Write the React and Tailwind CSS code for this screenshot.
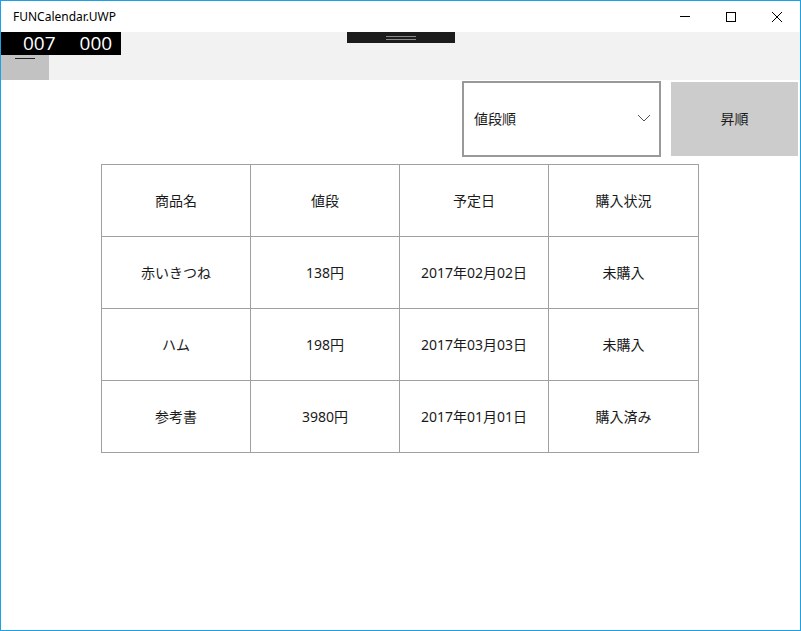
import React from "react";

const rows = [
  ["商品名", "値段", "予定日", "購入状況"],
  ["赤いきつね", "138円", "2017年02月02日", "未購入"],
  ["ハム", "198円", "2017年03月03日", "未購入"],
  ["参考書", "3980円", "2017年01月01日", "購入済み"],
];

export default function App() {
  return (
    <div
      className="w-[801px] h-[631px] border border-[#1aa1e6] bg-white flex flex-col overflow-hidden text-[#1a1a1a]"
      style={{ fontFamily: '"Noto Sans", "Noto Sans CJK JP", sans-serif' }}
    >
      {/* title bar */}
      <div className="h-[31px] flex items-center shrink-0">
        <div className="pl-[12px] text-[12px] text-black flex-1 leading-none">FUNCalendar.UWP</div>
        <div className="flex h-full">
          <div className="w-[46px] h-full flex items-center justify-center">
            <div className="w-[10px] h-px bg-black" />
          </div>
          <div className="w-[46px] h-full flex items-center justify-center">
            <div className="w-[10px] h-[10px] border border-black" />
          </div>
          <div className="w-[46px] h-full flex items-center justify-center">
            <svg width="10" height="10" viewBox="0 0 10 10">
              <path d="M0 0 L10 10 M10 0 L0 10" stroke="#000" strokeWidth="1" />
            </svg>
          </div>
        </div>
      </div>
      {/* top band */}
      <div className="h-[48px] bg-[#f2f2f2] flex shrink-0">
        <div className="flex flex-col">
          <div className="w-[120px] h-[23px] bg-black flex items-center text-white text-[19px] leading-none font-medium" style={{ fontFamily: '"Open Sans", sans-serif' }}>
            <span className="ml-[22px]">007</span>
            <span className="ml-[24px]">000</span>
          </div>
          <div className="w-[48px] h-[25px] bg-[#c2c2c2] flex justify-center pt-[3px]">
            <div className="w-[20px] h-px bg-[#222]" />
          </div>
        </div>
        <div className="ml-[226px] w-[108px] h-[11px] bg-[#1c1c1c] flex flex-col items-center justify-center gap-[2px]">
          <div className="w-[30px] h-px bg-[#8a8a8a]" />
          <div className="w-[30px] h-px bg-[#8a8a8a]" />
        </div>
      </div>
      {/* controls */}
      <div className="flex justify-end pr-[2px] gap-[10px] items-start h-[77px] shrink-0">
        <div className="w-[199px] h-[76px] border-2 border-[#999999] flex items-center justify-between pl-[10px] pr-[8px] mt-px">
          <span className="text-[14px] -mt-[2px]">値段順</span>
          <svg width="14" height="8" viewBox="0 0 14 8" className="-mt-[2px]">
            <path d="M1 1 L7 7 L13 1" fill="none" stroke="#555" strokeWidth="1" />
          </svg>
        </div>
        <div className="w-[127px] h-[74px] bg-[#cccccc] flex items-center justify-center text-[14px] mt-[2px]">
          <span className="-mt-[2px]">昇順</span>
        </div>
      </div>
      {/* table */}
      <div className="ml-[100px] mt-[7px] w-[598px] border-t border-l border-[#a0a0a0]">
        {rows.map((r, i) => (
          <div key={i} className="flex">
            {r.map((c, j) => (
              <div
                key={j}
                className={`${j === 3 ? "w-[150px]" : "w-[149px]"} h-[72px] border-r border-b border-[#a0a0a0] flex items-center justify-center text-[14px]`}
              >
                {c}
              </div>
            ))}
          </div>
        ))}
      </div>
    </div>
  );
}
